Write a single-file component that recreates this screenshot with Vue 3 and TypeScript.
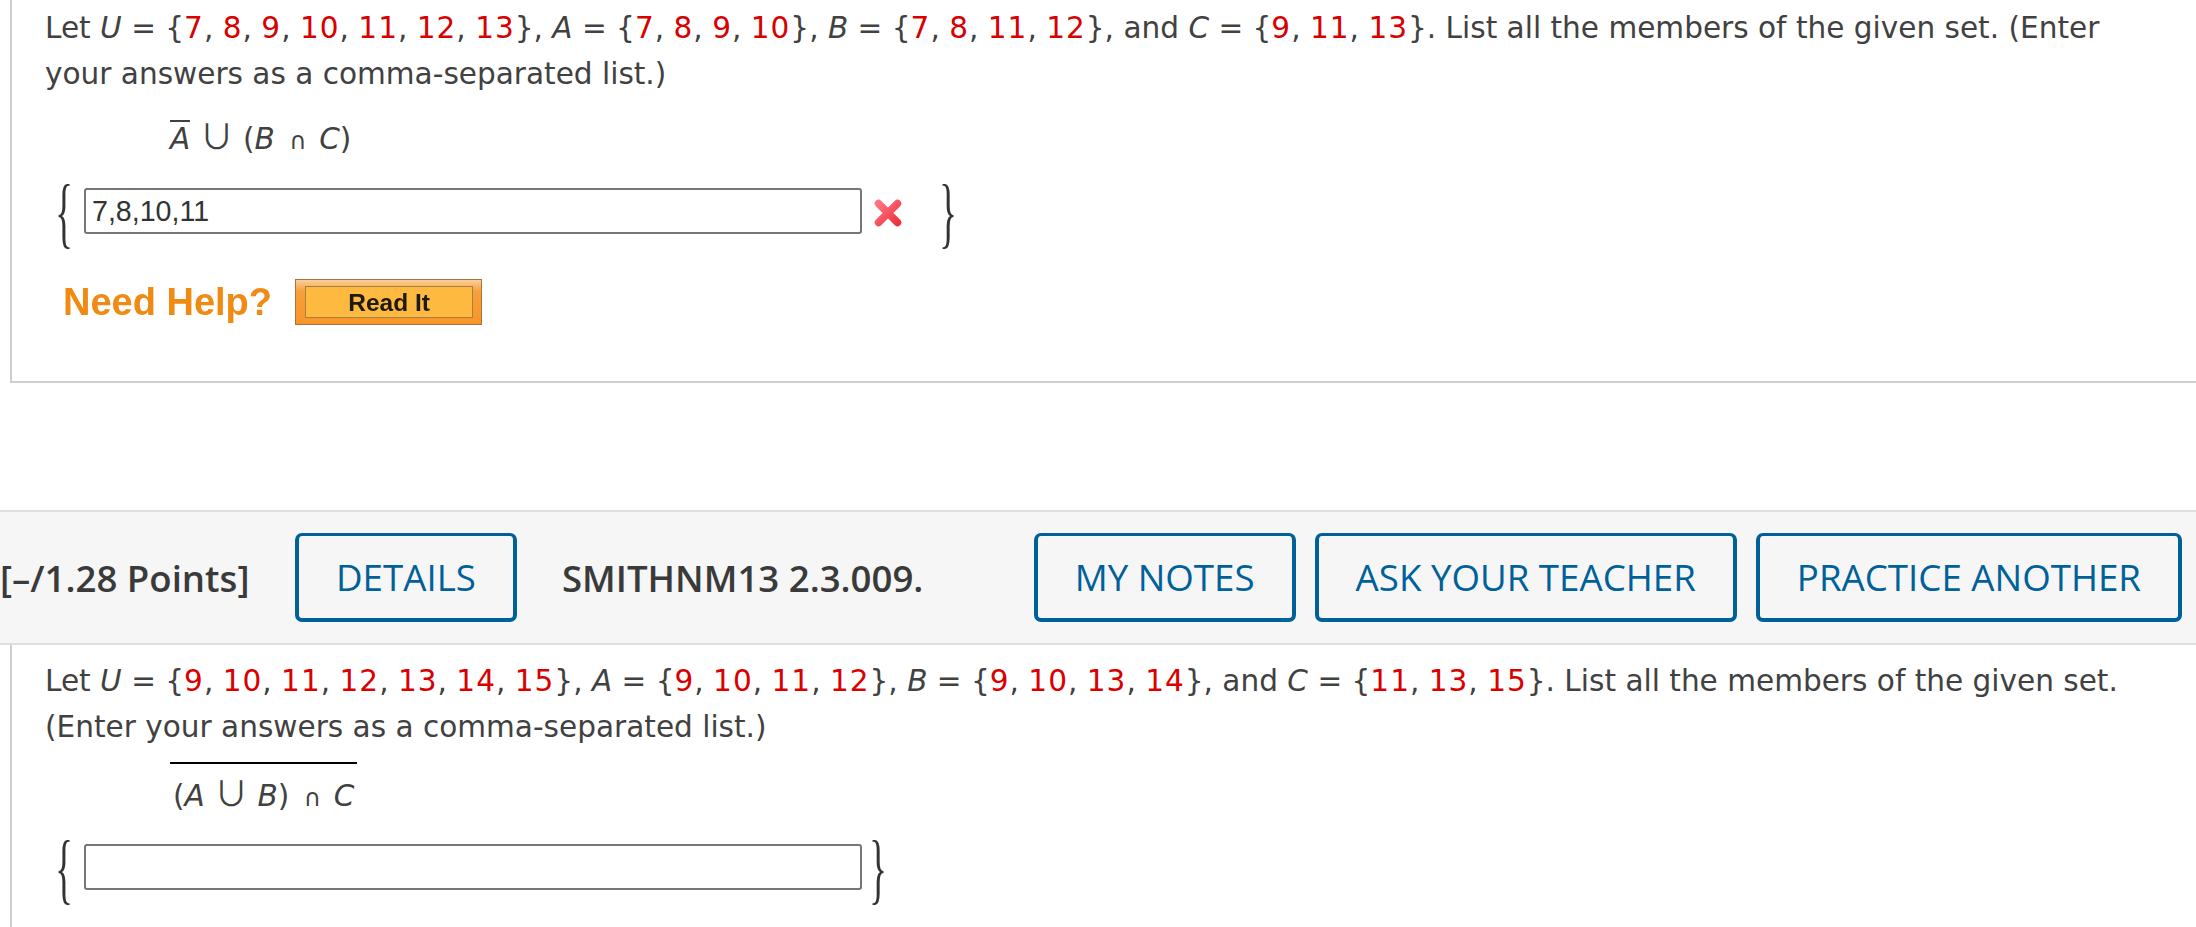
<script setup lang="ts">
const buttons = ['MY NOTES', 'ASK YOUR TEACHER', 'PRACTICE ANOTHER']
const first = {
  U: [7, 8, 9, 10, 11, 12, 13],
  A: [7, 8, 9, 10],
  B: [7, 8, 11, 12],
  C: [9, 11, 13],
}
const second = {
  U: [9, 10, 11, 12, 13, 14, 15],
  A: [9, 10, 11, 12],
  B: [9, 10, 13, 14],
  C: [11, 13, 15],
}
</script>

<template>
  <div class="page">
    <section class="panel first">
      <p class="question">
        Let <i>U</i> = {<template v-for="(n, i) in first.U" :key="i"><span class="red">{{ n }}</span><template v-if="i < first.U.length - 1">, </template></template>}, <i>A</i> = {<template v-for="(n, i) in first.A" :key="i"><span class="red">{{ n }}</span><template v-if="i < first.A.length - 1">, </template></template>}, <i>B</i> = {<template v-for="(n, i) in first.B" :key="i"><span class="red">{{ n }}</span><template v-if="i < first.B.length - 1">, </template></template>}, and <i>C</i> = {<template v-for="(n, i) in first.C" :key="i"><span class="red">{{ n }}</span><template v-if="i < first.C.length - 1">, </template></template>}. List all the members of the given set. (Enter<br />your answers as a comma-separated list.)
      </p>
      <div class="expr expr-a"><i class="bar-a">A</i> <span class="cup">∪</span> (<i>B</i> <span class="cap">∩</span> <i>C</i>)</div>
      <div class="answer">
        <span class="brace">{</span>
        <div class="box">7,8,10,11</div>
        <svg class="wrong" width="32" height="32" viewBox="0 0 32 32" aria-hidden="true">
          <defs>
            <linearGradient id="xg" x1="0" y1="0" x2="1" y2="1">
              <stop offset="0" stop-color="#ff7480" />
              <stop offset="1" stop-color="#ee3340" />
            </linearGradient>
          </defs>
          <path d="M6.5 6.5 25.5 25.5M25.5 6.5 6.5 25.5" stroke="url(#xg)" stroke-width="7.5" stroke-linecap="round" />
        </svg>
        <span class="brace close wide">}</span>
      </div>
      <div class="help">
        <span class="need">Need Help?</span>
        <div class="read"><span class="read-inner">Read It</span></div>
      </div>
    </section>

    <header class="bar">
      <strong class="points">[–/1.28 Points]</strong>
      <a class="btn">DETAILS</a>
      <strong class="code">SMITHNM13 2.3.009.</strong>
      <div class="actions">
        <a v-for="b in buttons" :key="b" class="btn">{{ b }}</a>
      </div>
    </header>

    <section class="panel second">
      <p class="question">
        Let <i>U</i> = {<template v-for="(n, i) in second.U" :key="i"><span class="red">{{ n }}</span><template v-if="i < second.U.length - 1">, </template></template>}, <i>A</i> = {<template v-for="(n, i) in second.A" :key="i"><span class="red">{{ n }}</span><template v-if="i < second.A.length - 1">, </template></template>}, <i>B</i> = {<template v-for="(n, i) in second.B" :key="i"><span class="red">{{ n }}</span><template v-if="i < second.B.length - 1">, </template></template>}, and <i>C</i> = {<template v-for="(n, i) in second.C" :key="i"><span class="red">{{ n }}</span><template v-if="i < second.C.length - 1">, </template></template>}. List all the members of the given set.<br />(Enter your answers as a comma-separated list.)
      </p>
      <div class="expr expr-b"><span class="over">(<i>A</i> <span class="cup">∪</span> <i>B</i>) <span class="cap">∩</span> <i>C</i></span></div>
      <div class="answer answer-b">
        <span class="brace">{</span>
        <div class="box"></div>
        <span class="brace close">}</span>
      </div>
    </section>
  </div>
</template>

<style>
html, body { margin: 0; padding: 0; background: #fff; overflow: hidden; }
</style>

<style scoped>
.page {
  display: flex;
  flex-direction: column;
  width: 2196px;
  height: 927px;
  overflow: hidden;
  font-family: "DejaVu Sans", sans-serif;
  color: #414141;
}
.panel {
  margin-left: 10px;
  border-left: 2px solid #cfcfcf;
  padding-left: 33px;
}
.first {
  flex: none;
  height: 383px;
  box-sizing: border-box;
  border-bottom: 2px solid #cfcfcf;
  padding-top: 5px;
}
.second { flex: 1; padding-top: 13px; }
.question {
  margin: 0;
  font-size: 29.55px;
  line-height: 46px;
  white-space: nowrap;
}
.red { color: #d90000; letter-spacing: 1px; }
.expr {
  margin-left: 125px;
  font-size: 29.55px;
  line-height: 46px;
  white-space: pre-wrap;
}
.expr-a { margin-top: 19px; }
.expr-b { margin-top: 12px; }
.bar-a { display: inline-block; line-height: 34px; border-top: 2px solid #414141; }
.over { display: inline-block; border-top: 2px solid #000; padding: 9px 3px 0 3px; }
.cup {
  font-family: "Noto Sans CJK JP", "DejaVu Sans", sans-serif;
  font-weight: 400;
  font-size: 34px;
  line-height: 30px;
}
.cap { margin: 0 3px 0 5px; font-size: 24px; line-height: 30px; }
.answer {
  display: flex;
  align-items: center;
  height: 66px;
  margin-top: 16px;
}
.answer-b { margin-top: 15px; }
.brace {
  flex: none;
  width: 34px;
  margin-left: 5px;
  margin-top: 4px;
  font-family: "Liberation Serif", serif;
  font-size: 78px;
  font-weight: 400;
  line-height: 66px;
  color: #333;
  transform: scaleX(.47);
  transform-origin: 10px 50%;
}
.close { width: 20px; margin-left: 2px; }
.close.wide { margin-left: 30px; }
.box {
  flex: none;
  width: 778px;
  height: 46px;
  box-sizing: border-box;
  border: 2px solid #767676;
  border-radius: 3px;
  padding-left: 6px;
  font-family: "Liberation Sans", sans-serif;
  font-size: 28.6px;
  line-height: 42px;
  color: #333;
}
.wrong {
  flex: none;
  margin-left: 10px;
  margin-top: 4px;
  filter: blur(.5px);
}
.help {
  display: flex;
  align-items: center;
  margin-top: 35px;
  margin-left: 18px;
}
.need {
  font-family: "Liberation Sans", sans-serif;
  font-weight: 700;
  font-size: 38px;
  line-height: 46px;
  color: #f08a12;
  filter: blur(.6px);
}
.read {
  width: 187px;
  height: 46px;
  box-sizing: border-box;
  margin-left: 23px;
  padding: 6px 8px 6px 9px;
  border: 1px solid #a8743a;
  background: linear-gradient(#f9d0a0, #f8a03a 25%, #f8952a);
}
.read-inner {
  display: block;
  height: 100%;
  box-sizing: border-box;
  border: 1px solid #a8803f;
  background: #feba40;
  text-align: center;
  font-family: "Liberation Sans", sans-serif;
  font-weight: 700;
  font-size: 24.5px;
  line-height: 31px;
  color: #1e1a10;
  filter: blur(.4px);
}
.bar {
  flex: none;
  display: flex;
  align-items: center;
  box-sizing: border-box;
  height: 135px;
  margin-top: 127px;
  padding-right: 14px;
  background: #f6f6f6;
  border-top: 2px solid #e0e0e0;
  border-bottom: 2px solid #e0e0e0;
  font-family: "Open Sans", sans-serif;
}
.points, .code {
  font-size: 36.6px;
  font-weight: 600;
  color: #3a3a3a;
  white-space: nowrap;
}
.points { width: 295px; flex: none; }
.code { margin-left: 45px; }
.actions { display: flex; gap: 19px; margin-left: auto; }
.btn {
  display: flex;
  align-items: center;
  justify-content: center;
  box-sizing: border-box;
  height: 89px;
  padding: 0 37px;
  border: 4px solid #00609a;
  border-top-width: 3px;
  border-radius: 7px;
  font-size: 36.7px;
  font-weight: 500;
  color: #00609a;
  white-space: nowrap;
}
</style>
